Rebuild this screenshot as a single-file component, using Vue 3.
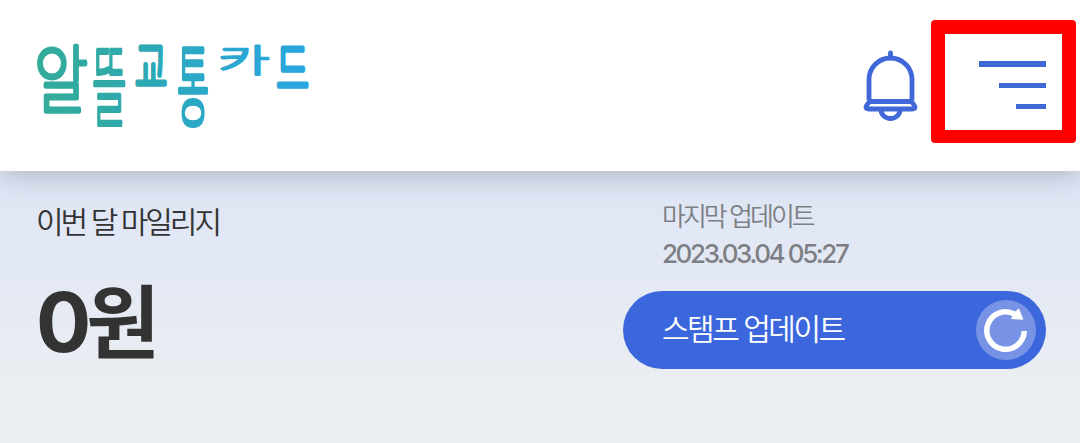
<template>
  <div class="screen">
    <header class="header">
      <a class="logo" aria-label="알뜰교통카드">
        <svg width="276" height="88" viewBox="0 0 276 88">
          <defs>
            <linearGradient v-for="(g, i) in glyphs" :id="'logo' + i" :key="i">
              <stop offset="0" :stop-color="g.from" />
              <stop offset="1" :stop-color="g.to" />
            </linearGradient>
          </defs>
          <text
            v-for="(g, i) in glyphs"
            :key="g.char"
            class="logo-char"
            :fill="`url(#logo${i})`"
            :stroke="`url(#logo${i})`"
            :stroke-width="g.stroke"
            :transform="`translate(${g.x} ${g.y}) scale(${g.sx} ${g.sy})`"
          >{{ g.char }}</text>
        </svg>
      </a>
      <button class="icon-btn bell">
        <svg width="56" height="72" viewBox="0 0 56 72" fill="none" stroke="#4068d9" stroke-width="4.8">
          <path d="M27.500 3V8" stroke-linecap="round" />
          <path d="M6 50V29.500a21.500 21.500 0 0 1 43 0V50" />
          <path d="M6.500 51.500h42c1.500 2 3.500 4 3.500 5.500s-1 2-3 2H6c-2 0-3-.5-3-2s2-3.500 3.500-5.500z" stroke-linejoin="round" />
          <path d="M18 60a9.500 8.500 0 0 0 19 0" />
        </svg>
      </button>
      <button class="icon-btn menu">
        <span class="bar bar-lg"></span>
        <span class="bar bar-md"></span>
        <span class="bar bar-sm"></span>
      </button>
    </header>

    <main class="summary">
      <section class="mileage">
        <h2 class="mileage-title">이번 달 마일리지</h2>
        <p class="mileage-value"><span class="num">0</span><span class="won">원</span></p>
      </section>
      <section class="update">
        <p class="update-label">마지막 업데이트</p>
        <p class="update-date">2023.03.04 05:27</p>
        <button class="stamp-btn">
          <span class="stamp-text">스탬프 업데이트</span>
          <span class="refresh">
            <svg width="60" height="60" viewBox="0 0 60 60">
              <path d="M48.200 31A18.700 18.700 0 1 1 38.500 14.200" fill="none" stroke="#fff" stroke-width="5.500" />
              <path d="M43 8.500L47.500 19.800L35 19L38.500 12z" fill="#fff" />
            </svg>
          </span>
        </button>
      </section>
    </main>
  </div>
</template>

<script setup>
// each syllable of the wordmark has its own proportions
const glyphs = [
  { char: '알', x: -1, y: 66, sx: 0.65, sy: 0.82, stroke: 4.4, from: '#34ac98', to: '#31aaa5' },
  { char: '뜰', x: 57, y: 78, sx: 0.42, sy: 0.98, stroke: 3.6, from: '#33aba1', to: '#2ea9b0' },
  { char: '교', x: 100, y: 47, sx: 0.39, sy: 0.63, stroke: 4.6, from: '#2eaab0', to: '#2ba8bd' },
  { char: '통', x: 142, y: 78, sx: 0.39, sy: 0.98, stroke: 4, from: '#2ca9c0', to: '#2aa8cc' },
  { char: '카', x: 183, y: 31, sx: 0.62, sy: 0.36, stroke: 3.6, from: '#2aa8cc', to: '#29a6da' },
  { char: '드', x: 241.5, y: 47.5, sx: 0.39, sy: 0.62, stroke: 4.8, from: '#29a6d8', to: '#29a5e1' }
]
</script>

<style>
body {
  margin: 0;
}
</style>

<style scoped>
.screen {
  width: 1080px;
  height: 443px;
  overflow: hidden;
  background: linear-gradient(180deg, #dfe6f5 171px, #e2e8f4 260px, #edf0f2 420px);
  font-family: Inter, 'Noto Sans CJK KR', sans-serif;
}

.header {
  position: relative;
  display: flex;
  align-items: flex-start;
  height: 171px;
  box-sizing: border-box;
  padding: 20px 4px 0 35px;
  background: #fff;
  box-shadow: 0 4px 26px rgba(90, 95, 105, 0.36);
}

.logo {
  margin-top: 21px;
}

.logo svg,
.bell svg,
.refresh svg {
  display: block;
  overflow: visible;
}

.logo-char {
  font-family: 'Noto Sans CJK KR', sans-serif;
  font-size: 90px;
  font-weight: 100;
  stroke-linejoin: round;
  vector-effect: non-scaling-stroke;
}

.icon-btn {
  border: 0;
  padding: 0;
  background: none;
}

.bell {
  margin: 30px 12px 0 auto;
}

.menu {
  display: flex;
  flex-direction: column;
  align-items: flex-end;
  width: 145px;
  height: 123px;
  box-sizing: border-box;
  padding: 27px 16px 0 0;
  border: 14px solid #f00;
  border-bottom-width: 13px;
  border-radius: 4px;
}

.bar {
  height: 5px;
  margin-bottom: 16px;
  background: #4068d4;
}

.bar-lg {
  width: 67px;
  height: 6px;
}

.bar-md {
  width: 47px;
}

.bar-sm {
  width: 30px;
}

.summary {
  display: flex;
  justify-content: space-between;
  padding: 28px 34px 0 36px;
}

h2,
p {
  margin: 0;
  white-space: nowrap;
}

.mileage-title {
  height: 45px;
  margin-top: 1px;
  line-height: 45px;
  color: #333;
  font-size: 30px;
  font-weight: 350;
  letter-spacing: -3px;
}

.mileage-value {
  display: flex;
  height: 110px;
  margin-top: 23px;
  line-height: 110px;
  color: #333;
  font-weight: 700;
}

.num {
  font-size: 82px;
  letter-spacing: -5px;
}

.won {
  font-size: 80px;
}

.update {
  width: 423px;
}

.update-label,
.update-date {
  height: 36px;
  padding-left: 39px;
  line-height: 36px;
  color: #7d7f84;
  font-size: 26px;
}

.update-label {
  font-weight: 350;
  letter-spacing: -3px;
}

.update-date {
  height: 37px;
  line-height: 37px;
  font-weight: 450;
  letter-spacing: -2.4px;
}

.stamp-btn {
  display: flex;
  align-items: center;
  justify-content: space-between;
  width: 423px;
  height: 78px;
  margin-top: 19px;
  padding: 0 10px 0 39px;
  border: 0;
  border-radius: 39px;
  background: #3c67dc;
  color: #fff;
  font-family: inherit;
}

.stamp-text {
  padding-bottom: 7px;
  font-size: 30px;
  font-weight: 350;
  letter-spacing: -2.5px;
}

.refresh {
  width: 60px;
  height: 60px;
  border-radius: 50%;
  background: #7893e5;
}
</style>
